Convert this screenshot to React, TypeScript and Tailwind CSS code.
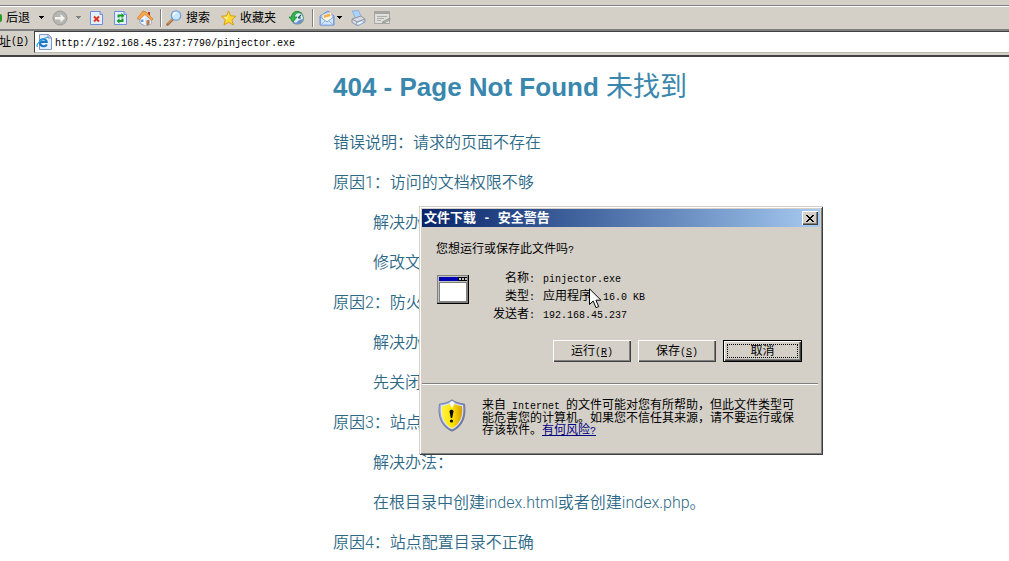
import type { ReactNode } from 'react';

const cjk = "font-['Liberation_Sans','Noto_Sans_CJK_SC',sans-serif]";

function Mono({ children }: { children: ReactNode }) {
  return (
    <span className="font-['Liberation_Mono',monospace] text-[10px] leading-none whitespace-pre">{children}</span>
  );
}

function Caret({ color }: { color: string }) {
  return (
    <svg width="5" height="3" viewBox="0 0 5 3" shapeRendering="crispEdges">
      <path d="M0 0h5v1H4v1H3v1H2V2H1V1H0z" fill={color} />
    </svg>
  );
}

function ForwardIcon() {
  return (
    <svg width="16" height="16" viewBox="0 0 16 16">
      <circle cx="8" cy="8" r="7" fill="#b5b5b1" stroke="#9c9c98" />
      <path d="M3 7h5.500V4l4.500 4.200L8.500 12.500V9.500H3z" fill="#f4f3ef" />
    </svg>
  );
}

function PageShape() {
  return (
    <>
      <path d="M.5 1.500h9.500L12.500 4.500v10H.5z" fill="#e4efff" stroke="#6f8fdc" />
      <path d="M10 1.500v3h2.500" fill="#b9cdf8" stroke="#6f8fdc" />
    </>
  );
}

function StopIcon() {
  return (
    <svg width="14" height="16" viewBox="0 0 14 16">
      <PageShape />
      <path d="M4 6.500l5 5M9 6.500l-5 5" stroke="#e2351b" strokeWidth="2" />
    </svg>
  );
}

function RefreshIcon() {
  return (
    <svg width="14" height="16" viewBox="0 0 14 16">
      <PageShape />
      <path d="M3.500 7.500V4.500h4V3l3 2.700-3 2.500V6.500H5.500v1z" fill="#179b25" />
      <path d="M9.500 8.500v3.500h-4v1.500l-3-2.500 3-2.700V10h2V8.500z" fill="#179b25" />
    </svg>
  );
}

function HomeIcon() {
  return (
    <svg width="17" height="16" viewBox="0 0 17 16">
      <path d="M11 2h2v4h-2z" fill="#b63c1b" />
      <path d="M3 8l5-5 6 6v5l-6 2-5-3z" fill="#f3f7ff" stroke="#7790be" strokeWidth=".8" />
      <path d="M8 5l6 5v4l-6 2z" fill="#dbe7fa" />
      <path d="M0 8.500L6 1l3 1 7 7-1.500 1.200L8 4.500 2.500 9.500z" fill="#f6a94c" stroke="#c9762c" strokeWidth=".7" />
      <path d="M9.500 10.500l3-.7v5l-3 .9z" fill="#b57a4b" />
      <path d="M4 9.500h2.500V12H4z" fill="#6c9ce8" />
    </svg>
  );
}

function SearchIcon() {
  return (
    <svg width="16" height="16" viewBox="0 0 16 16">
      <path d="M7 9l-5.500 5.500" stroke="#a76f42" strokeWidth="2.600" strokeLinecap="round" />
      <path d="M7 8.500l-5 5" stroke="#e2b07c" strokeWidth="1" />
      <circle cx="10" cy="5.500" r="4.700" fill="#c9e8fd" stroke="#6d9ede" strokeWidth="1.200" />
      <path d="M7.500 5.500c0-2 1.500-3 3-3" stroke="#fff" strokeWidth="1.400" fill="none" />
    </svg>
  );
}

function StarIcon() {
  return (
    <svg width="16" height="16" viewBox="0 0 16 16">
      <path d="M7.500 1l2 4.800 5.500.4-4.200 3.600 1.700 5.200-4.800-2.800L3 15l1.300-5.200L.5 6.200l5-.4z" fill="#ffdc38" stroke="#d79a16" />
      <path d="M7.500 3l-1.200 4-3.500.2 3 2.500" fill="#fff6a5" />
    </svg>
  );
}

function HistoryIcon() {
  return (
    <svg width="17" height="16" viewBox="0 0 17 16">
      <circle cx="9.500" cy="8" r="6" fill="#d9f0f7" stroke="#6f9a8b" strokeWidth="1.200" />
      <path d="M4.500 13c4 2.500 9.500 1 10.500-4l-4 1-2.500 2.500z" fill="#6f8fd0" />
      <path d="M13.500 3C8.500-.5 4 2 3.500 7H1l4 5 4-5H6.500c0-3 3-5 7-4z" fill="#35b44a" stroke="#198236" strokeWidth=".7" />
      <path d="M10 8l3-3M10 8h3" stroke="#2b5260" strokeWidth="1.100" />
    </svg>
  );
}

function MailIcon() {
  return (
    <svg width="16" height="16" viewBox="0 0 16 16">
      <path d="M1 6l8-5 6 5v9H1z" fill="#a9c8f5" stroke="#6a91d6" />
      <path d="M3 5l9-3 1.500 7-5 3-5-3z" fill="#fff8df" stroke="#b9bfc9" strokeWidth=".6" />
      <path d="M4.500 5.500l6.500-2 .7 2.500-6.700 2z" fill="#f4af52" />
      <path d="M1.500 7l6.500 5 6.500-5v8h-13z" fill="#d3e6ff" stroke="#7198da" strokeWidth=".8" />
      <path d="M1.500 15L6.500 10.800M14.500 15l-5-4.200" stroke="#86a8df" strokeWidth=".8" />
    </svg>
  );
}

function PrinterIcon() {
  return (
    <svg width="16" height="16" viewBox="0 0 16 16">
      <path d="M2.500 1l6-.5 3 7-6 1.500z" fill="#a9d4ff" stroke="#84a8d8" strokeWidth=".8" />
      <path d="M2 9l9-3 4 3v3l-8 3.500-5-3z" fill="#d7dae2" stroke="#8a8e9c" strokeWidth=".9" />
      <path d="M2 9l5 3 8-3" fill="none" stroke="#8a8e9c" strokeWidth=".9" />
      <path d="M6 13l6-2.500 2 2-6 3z" fill="#eef5ff" stroke="#7495ca" strokeWidth=".8" />
    </svg>
  );
}

function EditIcon() {
  return (
    <svg width="17" height="14" viewBox="0 0 17 14">
      <path d="M.5.5h15v12H.5z" fill="#dededb" stroke="#a5a5a1" />
      <path d="M1 1h14v2H1z" fill="#a5a5a1" />
      <path d="M3 5.500h10M3 7.500h7M3 9.500h4" stroke="#acaca8" />
      <path d="M16 7l-6 3-2 1.500h3l5-3z" fill="#b9b9b5" stroke="#888884" strokeWidth=".7" />
    </svg>
  );
}

function ExplorerIcon() {
  return (
    <svg width="16" height="16" viewBox="0 0 16 16">
      <path d="M3.500.5h9l3 3v12h-12z" fill="#e7f0ff" stroke="#8095c9" />
      <path d="M12 .5v3.500h3.500" fill="#bfcdf0" stroke="#8095c9" />
      <path d="M10.800 10.500c-1.200 2.800-6.800 2.500-6.800-2S10.800 4.500 10.800 8H4.500" fill="none" stroke="#1b78c9" strokeWidth="2" />
      <path d="M1.500 13C-.5 10.500 5 4.500 12 3" fill="none" stroke="#39a5e3" strokeWidth="1.200" />
    </svg>
  );
}

function ProgramIcon() {
  return (
    <svg width="32" height="29" viewBox="0 0 32 29" shapeRendering="crispEdges">
      <path d="M0 0h32v29H0z" fill="#000" />
      <path d="M0 0h31v28H0z" fill="#808080" />
      <path d="M1 1h29v26H1z" fill="#c0c0c0" />
      <path d="M2 2h28v4H2z" fill="#0000b0" />
      <path d="M21 2h9v4h-9z" fill="#000" />
      <path d="M22 3h2v2h-2zM25 3h2v2h-2zM28 3h2v2h-2z" fill="#c0c0c0" />
      <path d="M2 7h28v20H2z" fill="#808080" />
      <path d="M3 8h26v18H3z" fill="#fff" />
    </svg>
  );
}

function ShieldIcon() {
  return (
    <svg width="28" height="33" viewBox="0 0 28 33">
      <defs>
        <linearGradient id="gold" x1="0" x2="1">
          <stop offset="0" stopColor="#fff04a" />
          <stop offset=".5" stopColor="#ffe600" />
          <stop offset="1" stopColor="#d99a00" />
        </linearGradient>
        <linearGradient id="rim" x1="0" x2="1" y2="1">
          <stop offset="0" stopColor="#a9bce8" />
          <stop offset="1" stopColor="#5b6795" />
        </linearGradient>
      </defs>
      <path d="M14 .8c3 2.400 8 3.800 12.500 4.200 2 12-1.500 22.500-12.500 27.200C3 27.500-.5 17 1.500 5 6 4.600 11 3.200 14 .8z" fill="url(#rim)" stroke="#6a7290" strokeWidth=".8" />
      <path d="M14 2.500c3 2.200 7 3.300 11 3.800 1.500 10.500-1.700 20-11 24.200C4.700 26.300 1.500 16.800 3 6.300 7 5.800 11 4.700 14 2.500z" fill="#dfe5f6" />
      <path d="M14 4c3 1.800 6.500 2.800 10 3.200 1.200 9.800-2 18-10 22C6 25.200 2.800 17 4 7.200 7.500 6.800 11 5.800 14 4z" fill="url(#gold)" />
      <path d="M11.500 3.500L14 2l2.500 1.500-1.700 5h-1.400z" fill="#f5f7fc" />
      <path d="M11.500 12.500c0-2.500 4-2.500 4 0L14.200 19h-1.400z" fill="#080808" />
      <circle cx="13.500" cy="22" r="1.600" fill="#080808" />
    </svg>
  );
}

function Pointer() {
  return (
    <svg className="absolute top-[82px] left-[170px]" width="13" height="21" viewBox="0 0 13 21">
      <path d="M.5.8v15.700l3.700-3.500 2.800 6.700 2.700-1.100-2.800-6.400h5z" fill="#fff" stroke="#000" />
    </svg>
  );
}

function Separator() {
  return <span className="h-[18px] w-[2px] border-l border-r border-l-[#808080] border-r-white" />;
}

function Toolbar() {
  return (
    <div className="flex h-[31px] items-center overflow-hidden border-b-2 border-[#808080] bg-[#d4d0c8] pt-[5px] whitespace-nowrap text-black">
      <div className="flex h-full w-full items-center border-t border-[#808080] shadow-[inset_0_1px_0_#fff]">
        <button className="flex items-center">
          <span className="mr-[4px] h-[8px] w-[2px] rounded-r bg-[#299a25]" />
          后退
        </button>
        <button aria-label="后退列表" className="ml-[9px]"><Caret color="#000" /></button>
        <button aria-label="前进" className="ml-[8px]"><ForwardIcon /></button>
        <button aria-label="前进列表" className="ml-[8px]"><Caret color="#808080" /></button>
        <button aria-label="停止" className="ml-[9px]"><StopIcon /></button>
        <button aria-label="刷新" className="ml-[10px]"><RefreshIcon /></button>
        <button aria-label="主页" className="mr-[6px] ml-[9px]"><HomeIcon /></button>
        <Separator />
        <button className="ml-[4px] flex items-center gap-[4px]"><SearchIcon />搜索</button>
        <button className="ml-[11px] flex items-center gap-[3px]"><StarIcon />收藏夹</button>
        <button aria-label="历史" className="mr-[7px] ml-[12px]"><HistoryIcon /></button>
        <Separator />
        <button aria-label="邮件" className="ml-[5px] flex items-center gap-[2px]"><MailIcon /><Caret color="#000" /></button>
        <button aria-label="打印" className="ml-[8px]"><PrinterIcon /></button>
        <button aria-label="编辑" className="ml-[8px]"><EditIcon /></button>
      </div>
    </div>
  );
}

function AddressBar() {
  return (
    <div className="flex h-[26px] border-b-2 border-[#404040] bg-[#d4d0c8] pb-[2px]">
      <label htmlFor="address" className="flex w-[34px] items-center whitespace-nowrap">
        <span className="-ml-px">址</span>
        <Mono>(<u>D</u>)</Mono>
      </label>
      <div className="flex flex-1 items-center border-t border-b border-l border-[#404040] border-b-[#b8bdb4] bg-white pl-px">
        <ExplorerIcon />
        <input
          id="address"
          defaultValue="http://192.168.45.237:7790/pinjector.exe"
          className="ml-[3px] min-w-0 flex-1 bg-transparent pt-[4px] font-['Liberation_Mono',monospace] text-[10px] leading-[16px] outline-none"
        />
      </div>
    </div>
  );
}

const lines = [
  { text: '错误说明：请求的页面不存在', indent: false },
  { text: '原因1：访问的文档权限不够', indent: false },
  { text: '解决办', indent: true },
  { text: '修改文', indent: true },
  { text: '原因2：防火', indent: false },
  { text: '解决办', indent: true },
  { text: '先关闭', indent: true },
  { text: '原因3：站点', indent: false },
  { text: '解决办法：', indent: true },
  { text: '在根目录中创建index.html或者创建index.php。', indent: true },
  { text: '原因4：站点配置目录不正确', indent: false },
];

function ErrorPage() {
  return (
    <main className="ml-[33%] pt-[14px] whitespace-nowrap">
      <h1 className="mb-[20px] text-[26px] leading-[32px] font-bold text-[#3a87ad]">
        404 - Page Not Found <span className="text-[27px] leading-none font-normal">未找到</span>
      </h1>
      <div className="font-['Roboto','Noto_Sans_CJK_SC',sans-serif] text-[16px] leading-[40px] font-[350] text-[#2d6987]">
        {lines.map((line, i) => (
          <p key={i} className={line.indent ? 'pl-[40px]' : ''}>
            {line.text}
          </p>
        ))}
      </div>
    </main>
  );
}

const raised =
  'h-[22px] w-[78px] bg-[#d4d0c8] leading-[18px] shadow-[inset_1px_1px_0_#fff,inset_-1px_-1px_0_#404040,inset_-2px_-2px_0_#808080]';

function DownloadDialog() {
  return (
    <section
      role="dialog"
      aria-labelledby="dialog-title"
      className="absolute top-[206px] left-[419px] h-[249px] w-[404px] bg-[#d4d0c8] p-[3px] shadow-[inset_1px_1px_0_#d4d0c8,inset_-1px_-1px_0_#404040,inset_2px_2px_0_#fff,inset_-2px_-2px_0_#808080]"
    >
      <header className="flex h-[18px] items-center justify-between bg-linear-to-r from-[#0a246a] to-[#a6caf0] pr-[2px] pl-[2px]">
        <h2 id="dialog-title" className="text-[13px] font-bold text-white">
          文件下载
          <span className="font-['Liberation_Mono',monospace] text-[12px] leading-none whitespace-pre"> - </span>
          安全警告
        </h2>
        <button
          aria-label="关闭"
          className="flex h-[14px] w-[16px] items-center justify-center bg-[#d4d0c8] shadow-[inset_1px_1px_0_#fff,inset_-1px_-1px_0_#404040,inset_-2px_-2px_0_#808080]"
        >
          <svg width="8" height="7" viewBox="0 0 8 7" shapeRendering="crispEdges">
            <path d="M0 0h2v1h1v1h2V1h1V0h2v1H7v1H6v1H5v1h1v1h1v1h1v1H6V6H5V5H3v1H2v1H0V6h1V5h1V4h1V3H2V2H1V1H0z" fill="#000" />
          </svg>
        </button>
      </header>

      <p className="mt-[13px] ml-[14px] leading-[18px]">您想运行或保存此文件吗<Mono>?</Mono></p>

      <div className="mt-[11px] ml-[15px] flex">
        <div className="pt-[6px]"><ProgramIcon /></div>
        <dl className="ml-[20px] grid grid-cols-[46px_auto] gap-x-[8px] leading-[18px]">
          <dt className="text-right">名称<Mono>:</Mono></dt>
          <dd><Mono>pinjector.exe</Mono></dd>
          <dt className="text-right">类型<Mono>:</Mono></dt>
          <dd>应用程序<Mono>, 16.0 KB</Mono></dd>
          <dt className="text-right">发送者<Mono>:</Mono></dt>
          <dd><Mono>192.168.45.237</Mono></dd>
        </dl>
      </div>

      <div className="mt-[17px] mr-[18px] flex justify-end gap-[7px]">
        <button className={raised}>运行<Mono>(<u>R</u>)</Mono></button>
        <button className={raised}>保存<Mono>(<u>S</u>)</Mono></button>
        <button className="h-[22px] w-[79px] border border-black bg-[#d4d0c8] p-[3px] shadow-[inset_1px_1px_0_#fff,inset_-1px_-1px_0_#404040,inset_-2px_-2px_0_#808080]">
          <span className="flex h-full items-center justify-center border border-dotted border-black">取消</span>
        </button>
      </div>

      <hr className="mt-[21px] mr-[2px] h-[2px] border-t border-b border-t-[#808080] border-b-white" />

      <div className="mt-[14px] ml-[16px] flex gap-[16px]">
        <ShieldIcon />
        <p className="w-[316px] leading-[12px]">
          来自<Mono> Internet </Mono>的文件可能对您有所帮助，但此文件类型可
          <br />
          能危害您的计算机。如果您不信任其来源，请不要运行或保
          <br />
          存该软件。
          <a href="#risk" className="text-[#000080] underline">有何风险<Mono>?</Mono></a>
        </p>
      </div>
      <Pointer />
    </section>
  );
}

export default function App() {
  return (
    <div className={`relative min-h-screen overflow-hidden bg-white text-[12px] leading-[16px] text-black ${cjk}`}>
      <Toolbar />
      <AddressBar />
      <ErrorPage />
      <DownloadDialog />
    </div>
  );
}
